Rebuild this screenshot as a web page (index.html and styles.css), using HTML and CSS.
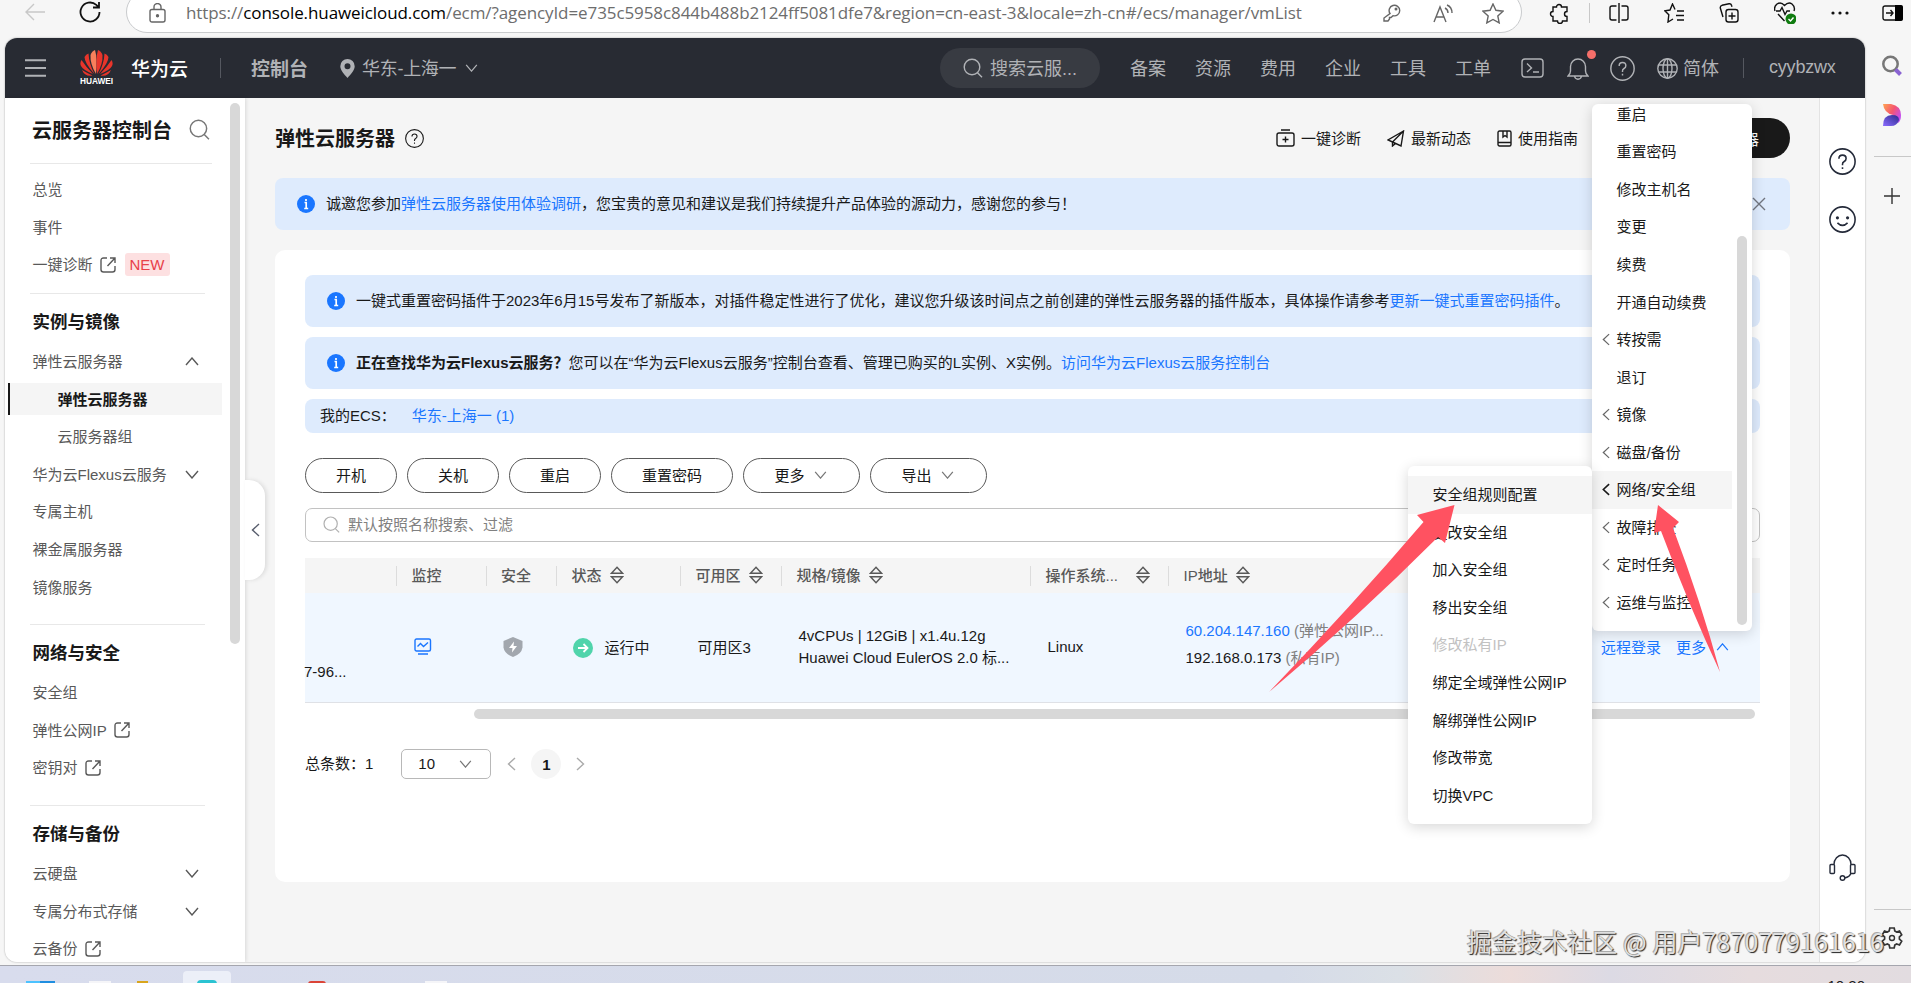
FILE: index.html
```html
<!DOCTYPE html>
<html lang="zh-CN">
<head>
    <meta charset="UTF-8">
    <title>弹性云服务器</title>
    <link rel="stylesheet" href="styles.css">
</head>
<body>
    <svg class="defs" width="0" height="0">
        <symbol id="down" viewBox="0 0 14 9"><path d="M1 1l6 7 6-7"/></symbol>
        <symbol id="up" viewBox="0 0 14 9"><path d="M1 8l6-7 6 7"/></symbol>
        <symbol id="left" viewBox="0 0 9 14"><path d="M8 1L1.500 7 8 13"/></symbol>
        <symbol id="right" viewBox="0 0 9 14"><path d="M1 1l6.500 6L1 13"/></symbol>
        <symbol id="search" viewBox="0 0 20 20"><circle cx="9" cy="9" r="7.800"/><path d="M14.500 14.800L19 19.300"/></symbol>
        <symbol id="link" viewBox="0 0 16 16"><path d="M7 1H3.500Q1 1 1 3.500v9Q1 15 3.500 15h9q2.500 0 2.500-2.500V9M10 1h5v5M15 1L7.500 9"/></symbol>
        <symbol id="help" viewBox="0 0 24 24"><circle cx="12" cy="12" r="11.200"/><path d="M8.800 9.500q0-3.200 3.200-3.200t3.200 3q0 1.700-1.700 2.700T12 14.500v.8M12 17v1.700"/></symbol>
        <symbol id="sort" viewBox="0 0 14 18"><path d="M7 1.200l5.500 6h-11zM7 16.800l5.500-6h-11z"/></symbol>
        <symbol id="info" viewBox="0 0 18 18"><circle cx="9" cy="9" r="9" fill="#1a76ff" stroke="none"/><path d="M7.500 7.500H9.200v6M7.200 13.500h4M9 4v2" stroke="#fff" stroke-width="1.700"/></symbol>
    </svg>

    <div class="toolbar">
        <svg class="back" width="21" height="18" viewBox="0 0 21 18"><path d="M20 9H1M9 1L1 9l8 8"/></svg>
        <svg class="reload" width="22" height="22" viewBox="0 0 22 22"><path d="M20.500 11a9.500 9.500 0 1 1-3.200-7.100L20 6.500M20 1v5.500h-6"/></svg>
        <div class="address">
            <svg width="17" height="20" viewBox="0 0 17 20"><rect x="1" y="6.500" width="15" height="12.500" rx="2"/><path d="M5 6.500V4a3.500 3.500 0 0 1 7 0v2.500"/><circle cx="8.500" cy="12.700" r="1" fill="#555"/></svg>
            <span class="url">https://<b>console.huaweicloud.com</b>/ecm/?agencyId=e735c5958c844b488b2124ff5081dfe7&amp;region=cn-east-3&amp;locale=zh-cn#/ecs/manager/vmList</span>
            <svg class="key" width="18" height="18" viewBox="0 0 18 18"><path d="M7 9.500a5.300 5.300 0 1 1 3 2.200L8 13.500H6.500V15L5 17H1v-3z"/><circle cx="13" cy="5" r=".8"/></svg>
            <svg class="read" width="20" height="19" viewBox="0 0 20 19"><path d="M1 18L7 3l6 15M3 13h8M12 4q3 1.500 3 5M14 1q5 2 5 8"/></svg>
            <svg width="22" height="21" viewBox="0 0 22 21"><path d="M11 1l2.900 6.300 7.100.9-5.200 4.700 1.400 7L11 16.500 4.800 19.900l1.400-7L1 8.200l7.100-.9z"/></svg>
        </div>
        <div class="tools">
            <svg width="20" height="21" viewBox="0 0 20 21"><path d="M4 4h3.500a2.500 2.500 0 0 1 5 0H18v4.500a2.500 2.500 0 0 0 0 5V18h-4.500a2.500 2.500 0 0 1-5 0H4v-4.500a2.500 2.500 0 0 1 0-5z"/></svg>
            <i></i>
            <svg width="20" height="20" viewBox="0 0 20 20"><path d="M7.500 3H3Q1 3 1 5v10q0 2 2 2h4.500M12.500 3H17q2 0 2 2v10q0 2-2 2h-4.500M10 0v20"/></svg>
            <svg width="20" height="20" viewBox="0 0 20 20"><path d="M11 6.500L8.500 1 6 7 .8 7.800l4 4L4 19l5-3M13 8h7M12 12.500h8M13 17h7"/></svg>
            <svg width="20" height="20" viewBox="0 0 20 20"><rect x="7" y="6.500" width="12" height="12.500" rx="2.500"/><path d="M13 9.500v7M9.500 13h7M4 14L1.300 5Q1 3 3 2.300L10 .8q2-.3 2.500 1.500l.5 1.500"/></svg>
            <svg width="22" height="22" viewBox="0 0 22 22"><path d="M1 9Q-.5 5 3 2q4-2.500 7.500 1.500Q14.500-.5 18 2q3.500 3 2 7M2 9h4l2-3.500 3 7 2-3.500h3M4 12l6.500 7"/><circle cx="17" cy="17" r="5.500" fill="#107c10" stroke="none"/><path d="M14.500 17l2 2 3-3.500" stroke="#fff"/></svg>
            <svg width="18" height="4" viewBox="0 0 18 4"><g fill="#111" stroke="none"><circle cx="2" cy="2" r="1.600"/><circle cx="9" cy="2" r="1.600"/><circle cx="16" cy="2" r="1.600"/></g></svg>
            <svg width="21" height="16" viewBox="0 0 21 16"><rect x="1" y="1" width="19" height="14" rx="2"/><path d="M13 0h6q2 0 2 2v12q0 2-2 2h-6z" fill="#000" stroke="none"/><path d="M4 8h7M8.500 5L11 8l-2.500 3"/></svg>
        </div>
    </div>

    <div class="window">
        <div class="page">
            <header class="header">
                <svg class="burger" width="21" height="18" viewBox="0 0 21 18"><path d="M0 1.200h21M0 9h21M0 16.800h21"/></svg>
                <div class="logo">
                    <svg width="33" height="26" viewBox="0 0 33 26"><g fill="#e8352b" stroke="none">
                        <path d="M16 24Q10 14 10.500 5 12 1 15 0q2.500 8 1 24z" fill="#f7805c"/><path d="M17 24Q23 14 22.500 5 21 1 18 0q-2.500 8-1 24z"/>
                        <path d="M14.500 24Q4.500 13 4.500 7 6 4 8.500 3.500 9 14 14.500 24zM18.500 24Q28.500 13 28.500 7 27 4 24.500 3.500 24 14 18.500 24z"/>
                        <path d="M13 24Q3 20 1 16q-1.500-3 .5-6Q6 17 13 24zM20 24q10-4 12-8 1.500-3-.5-6Q27 17 20 24z"/>
                        <path d="M12.500 25.500Q5 27 2 20q5 3 10.500 5.500zM20.500 25.500Q28 27 31 20q-5 3-10.500 5.500z"/></g></svg>
                    <span>HUAWEI</span>
                </div>
                <span class="brand">华为云</span>
                <i class="bar"></i>
                <span class="console">控制台</span>
                <svg class="pin" width="15" height="19" viewBox="0 0 15 19"><path fill-rule="evenodd" d="M7.500 0a7.200 7.200 0 0 1 7.200 7.200c0 4-4 8-7.200 11.800C4.300 15.200.3 11.200.3 7.200A7.200 7.200 0 0 1 7.500 0zm0 4.200a3 3 0 1 0 0 6 3 3 0 0 0 0-6z"/></svg>
                <span class="region">华东-上海一</span>
                <svg width="13" height="8"><use href="#down"/></svg>
                <div class="header-search"><svg width="20" height="20"><use href="#search"/></svg><span>搜索云服...</span></div>
                <nav><span>备案</span><span>资源</span><span>费用</span><span>企业</span><span>工具</span><span>工单</span></nav>
                <svg class="term" width="23" height="20" viewBox="0 0 23 20"><rect x="1" y="1" width="21" height="18" rx="3"/><path d="M6 5.500l4.500 4.500L6 14M12 14h6"/></svg>
                <div class="bell"><svg width="22" height="23" viewBox="0 0 22 23"><path d="M1 19h20q-2.500-2-2.500-5V9.500a7.500 7.500 0 0 0-15 0V14q0 3-2.500 5zM7.500 19q.5 3.200 3.500 3.200t3.500-3.200"/></svg><em></em></div>
                <svg class="header-help" width="25" height="25"><use href="#help"/></svg>
                <svg class="globe" width="21" height="21" viewBox="0 0 21 21"><circle cx="10.500" cy="10.500" r="9.700"/><ellipse cx="10.500" cy="10.500" rx="4.500" ry="9.700"/><path d="M1.500 7h18M1.500 14h18M10.500 1v19"/></svg>
                <span>简体</span>
                <i class="bar"></i>
                <span class="user">cyybzwx</span>
            </header>

            <div class="body">
                <aside class="sidebar">
                    <div class="side-title">云服务器控制台<svg width="21" height="21"><use href="#search"/></svg></div>
                    <ul>
                        <li>总览</li>
                        <li>事件</li>
                        <li>一键诊断<svg width="16" height="16"><use href="#link"/></svg><span class="new">NEW</span></li>
                    </ul>
                    <h3>实例与镜像</h3>
                    <ul>
                        <li>弹性云服务器<svg class="fold" width="14" height="9"><use href="#up"/></svg></li>
                        <li class="sub active">弹性云服务器</li>
                        <li class="sub">云服务器组</li>
                        <li>华为云Flexus云服务<svg class="fold" width="14" height="9"><use href="#down"/></svg></li>
                        <li>专属主机</li>
                        <li>裸金属服务器</li>
                        <li>镜像服务</li>
                    </ul>
                    <h3>网络与安全</h3>
                    <ul>
                        <li>安全组</li>
                        <li>弹性公网IP<svg width="16" height="16"><use href="#link"/></svg></li>
                        <li>密钥对<svg width="16" height="16"><use href="#link"/></svg></li>
                    </ul>
                    <h3>存储与备份</h3>
                    <ul>
                        <li>云硬盘<svg class="fold" width="14" height="9"><use href="#down"/></svg></li>
                        <li>专属分布式存储<svg class="fold" width="14" height="9"><use href="#down"/></svg></li>
                        <li>云备份<svg width="16" height="16"><use href="#link"/></svg></li>
                    </ul>
                    <div class="side-scroll"></div>
                    <div class="collapse"><svg width="9" height="14"><use href="#left"/></svg></div>
                </aside>

                <main class="main">
                    <div class="title-row">
                        <h1>弹性云服务器</h1>
                        <svg width="19" height="19"><use href="#help"/></svg>
                        <div class="links">
                            <span><svg width="19" height="18" viewBox="0 0 19 18"><rect x="1" y="4" width="17" height="13" rx="2"/><path d="M5 1h9M9.500 7.500v6M6.500 10.500h6"/></svg>一键诊断</span>
                            <span><svg width="18" height="17" viewBox="0 0 18 17"><path d="M16.500 1L1 10l4.500 2L14 16zM16.500 1l-11 11v4l3-2.500"/></svg>最新动态</span>
                            <span><svg width="15" height="17" viewBox="0 0 15 17"><rect x="1" y="1" width="13" height="15" rx="1.500"/><path d="M1 12.500h13M6 1v6l2-1.500L10 7V1"/></svg>使用指南</span>
                        </div>
                        <button class="buy">购买弹性云服务器</button>
                    </div>
                    <div class="notice top"><svg width="18" height="18"><use href="#info"/></svg><p>诚邀您参加<a>弹性云服务器使用体验调研</a>，您宝贵的意见和建议是我们持续提升产品体验的源动力，感谢您的参与！</p><svg class="close" width="14" height="14" viewBox="0 0 14 14"><path d="M1 1l12 12M13 1L1 13"/></svg></div>

                    <section class="card">
                        <div class="notice"><svg width="18" height="18"><use href="#info"/></svg><p>一键式重置密码插件于2023年6月15号发布了新版本，对插件稳定性进行了优化，建议您升级该时间点之前创建的弹性云服务器的插件版本，具体操作请参考<a>更新一键式重置密码插件</a>。</p></div>
                        <div class="notice"><svg width="18" height="18"><use href="#info"/></svg><p><b>正在查找华为云Flexus云服务？</b>您可以在“华为云Flexus云服务”控制台查看、管理已购买的L实例、X实例。<a>访问华为云Flexus云服务控制台</a></p></div>
                        <div class="my-ecs">我的ECS：<a>华东-上海一 (1)</a></div>
                        <div class="actions">
                            <button>开机</button>
                            <button>关机</button>
                            <button>重启</button>
                            <button class="wide">重置密码</button>
                            <button class="more">更多<svg width="13" height="8"><use href="#down"/></svg></button>
                            <button class="more">导出<svg width="13" height="8"><use href="#down"/></svg></button>
                        </div>
                        <div class="filter"><svg width="17" height="17"><use href="#search"/></svg>默认按照名称搜索、过滤</div>
                        <div class="table">
                            <div class="row head">
                                <span></span>
                                <span>监控</span>
                                <span>安全</span>
                                <span>状态<svg width="14" height="18"><use href="#sort"/></svg></span>
                                <span>可用区<svg width="14" height="18"><use href="#sort"/></svg></span>
                                <span>规格/镜像<svg width="14" height="18"><use href="#sort"/></svg></span>
                                <span>操作系统...<svg class="far" width="14" height="18"><use href="#sort"/></svg></span>
                                <span>IP地址<svg width="14" height="18"><use href="#sort"/></svg></span>
                                <span></span>
                            </div>
                            <div class="row data">
                                <span class="name">7-96...</span>
                                <span><svg class="monitor" width="18" height="17" viewBox="0 0 18 17"><rect x="1" y="1" width="15.500" height="12" rx="1.500"/><path d="M3.500 8.500l3-3 3 3L14 4.500M4 16h10"/></svg></span>
                                <span><svg class="shield" width="20" height="20" viewBox="0 0 20 20"><path d="M10 0l9.500 4v6.500Q18.500 17 10 20 1.500 17 .5 10.500V4z"/><path d="M11 4.500L6 11h3.500L9 15.500 14 9h-3.500z" fill="#fff"/></svg></span>
                                <span class="status"><svg width="20" height="20" viewBox="0 0 20 20"><circle cx="10" cy="10" r="10" fill="#50d4ab" stroke="none"/><path d="M5 10h9.500M10.500 6l4 4-4 4" stroke="#fff" stroke-width="1.800"/></svg>运行中</span>
                                <span>可用区3</span>
                                <span class="two">4vCPUs | 12GiB | x1.4u.12g<br>Huawei Cloud EulerOS 2.0 标...</span>
                                <span>Linux</span>
                                <span class="two ip"><a>60.204.147.160</a> <small>(弹性公网IP...</small><br>192.168.0.173 <small>(私有IP)</small></span>
                                <span class="ops"><a>远程登录</a><a>更多<svg width="13" height="8"><use href="#up"/></svg></a></span>
                            </div>
                            <div class="h-scroll"></div>
                        </div>
                        <div class="pager">
                            <span>总条数：1</span>
                            <div class="size">10<svg width="13" height="8"><use href="#down"/></svg></div>
                            <svg width="9" height="14"><use href="#left"/></svg>
                            <b>1</b>
                            <svg width="9" height="14"><use href="#right"/></svg>
                        </div>
                    </section>
                </main>

                <div class="strip">
                    <svg width="27" height="27"><use href="#help"/></svg>
                    <svg width="27" height="27" viewBox="0 0 24 24"><circle cx="12" cy="12" r="11.200"/><path d="M7.500 15q4.500 4.500 9 0"/><g fill="#252b3a" stroke="none"><circle cx="7.500" cy="10.500" r="1.400"/><circle cx="16.500" cy="10.500" r="1.400"/></g></svg>
                    <svg class="headset" width="27" height="27" viewBox="0 0 27 27"><path d="M5 10.500a8.500 9.500 0 0 1 17 0M22 19q-1 4-6.500 5"/><rect x="1" y="10.500" width="4.500" height="9" rx="1"/><rect x="21.500" y="10.500" width="4.500" height="9" rx="1"/><circle cx="13.500" cy="24" r="2.300"/></svg>
                </div>
            </div>
        </div>

        <div class="rail">
            <svg width="22" height="22" viewBox="0 0 22 22"><circle cx="9.500" cy="9" r="7.200" stroke="#777" stroke-width="2.500"/><path d="M14.500 14.500l5 5" stroke="#8a63d2" stroke-width="4"/></svg>
            <svg width="20" height="22" viewBox="0 0 20 22">
                <defs>
                    <linearGradient id="warm" x2="1" y2=".6"><stop offset="0" stop-color="#ffa552"/><stop offset=".55" stop-color="#f5566f"/><stop offset="1" stop-color="#c44df0"/></linearGradient>
                    <linearGradient id="cool" x1="1" x2="0" y2="1"><stop offset="0" stop-color="#2c2a8c"/><stop offset="1" stop-color="#8a6bff"/></linearGradient>
                </defs>
                <g stroke="none"><path d="M1 0h8q10 2 10 11 0 6-3 8l-5-8Q2 9 1 0z" fill="url(#warm)"/><path d="M1 22Q1 11 10 11q7 0 7 5-2 6-8 6z" fill="url(#cool)"/></g>
            </svg>
            <hr>
            <svg width="16" height="16" viewBox="0 0 16 16"><path d="M8 0v16M0 8h16"/></svg>
            <hr class="low">
            <svg width="22" height="22" viewBox="0 0 22 22"><path stroke-width="1.700" d="M8.800 1h4.400l.6 3 1.800 1 2.900-1 2.200 3.800-2.300 2v2.400l2.300 2-2.200 3.800-2.900-1-1.800 1-.6 3H8.800l-.6-3-1.800-1-2.900 1-2.200-3.800 2.300-2V9.800l-2.300-2L3.500 4l2.900 1 1.800-1z"/><circle cx="11" cy="11" r="2.500"/></svg>
        </div>
    </div>

    <div class="taskbar">
        <i class="win"></i><i class="doc"></i><i class="folder"></i><i class="tab"><b></b></i><i class="red"></i><i class="doc"></i>
        <time>10:20</time>
    </div>

    <!-- 更多 下拉菜单 -->
    <ul class="menu">
        <li>重启</li>
        <li>重置密码</li>
        <li>修改主机名</li>
        <li>变更</li>
        <li>续费</li>
        <li>开通自动续费</li>
        <li><svg width="8" height="13"><use href="#left"/></svg>转按需</li>
        <li>退订</li>
        <li><svg width="8" height="13"><use href="#left"/></svg>镜像</li>
        <li><svg width="8" height="13"><use href="#left"/></svg>磁盘/备份</li>
        <li class="active"><svg width="8" height="13"><use href="#left"/></svg>网络/安全组</li>
        <li><svg width="8" height="13"><use href="#left"/></svg>故障排查</li>
        <li><svg width="8" height="13"><use href="#left"/></svg>定时任务</li>
        <li><svg width="8" height="13"><use href="#left"/></svg>运维与监控</li>
    </ul>
    <ul class="menu submenu">
        <li class="active">安全组规则配置</li>
        <li>更改安全组</li>
        <li>加入安全组</li>
        <li>移出安全组</li>
        <li class="disabled">修改私有IP</li>
        <li>绑定全域弹性公网IP</li>
        <li>解绑弹性公网IP</li>
        <li>修改带宽</li>
        <li>切换VPC</li>
    </ul>
    <svg class="arrows" width="460" height="200" viewBox="1265 500 460 200">
        <path d="M1454.500 505L1417 515l6.500 7Q1350 608 1269 692q88-74 169-155l7 6z"/>
        <path d="M1658 505l21 17-6 6q28 74 47 144-30-64-59-141l-7 2z"/>
    </svg>
    <div class="watermark">掘金技术社区 @ 用户7870779161616</div>
</body>
</html>
```
FILE: styles.css
```css
* {
    box-sizing: border-box;
}

body {
    margin: 0;
    width: 1911px;
    height: 983px;
    overflow: hidden;
    position: relative;
    background: #f6f6f6;
    color: #191919;
    font-family: "Liberation Sans", "Noto Sans CJK SC", sans-serif;
    font-size: 15px;
}

ul, h1, h3, p {
    margin: 0;
    padding: 0;
    list-style: none;
}

svg {
    display: block;
    flex: none;
    fill: none;
    stroke: currentColor;
    stroke-width: 1.4;
}

.defs {
    position: absolute;
}

a {
    color: #1a76ff;
}

/* browser toolbar */
.toolbar {
    display: flex;
    height: 38px;
    color: #111;
}

.back {
    margin: 3px 0 0 25px;
    color: #c8c8c8;
}

.reload {
    margin: 1px 0 0 33px;
    stroke-width: 1.8;
}

.address {
    display: flex;
    align-items: center;
    width: 1396px;
    height: 42px;
    margin: -9px 0 0 25px;
    padding: 2px 18px 0 22px;
    border: 1px solid #c9cbcd;
    border-radius: 21px;
    background: #fff;
    color: #666;
}

.url {
    flex: none;
    width: 1115px;
    margin-left: 20px;
    padding-bottom: 2px;
    font-family: "Open Sans", "Noto Sans", sans-serif;
    font-size: 17px;
    letter-spacing: -0.09px;
    white-space: nowrap;
    color: #6d6d6d;
}

.url b {
    font-weight: 400;
    color: #000;
}

.key {
    margin-left: 82px;
}

.read {
    margin: 0 29px 0 32px;
}

.tools {
    display: flex;
    align-items: center;
    height: 26px;
    margin-left: 27px;
    gap: 35px;
}

.tools i {
    width: 1px;
    height: 20px;
    margin: 0 -16px 0 -15px;
    background: #c8c8c8;
}

.tools svg:last-child {
    margin-left: -2px;
}

/* window */
.window {
    display: flex;
    height: 924px;
}

.page {
    width: 1860px;
    height: 924px;
    margin-left: 5px;
    border-radius: 12px;
    overflow: hidden;
    box-shadow: 0 0 2px rgba(0, 0, 0, 0.35);
}

.header {
    display: flex;
    align-items: center;
    height: 60px;
    background: #282b33;
    color: #b0b2b6;
    font-size: 18px;
}

.header > span, .header nav, .header-search span {
    padding-bottom: 2px;
}

.burger {
    margin: 0 34px 0 20px;
    stroke-width: 2;
}

.logo {
    display: flex;
    flex-direction: column;
    align-items: center;
    width: 33px;
}

.logo span {
    font: bold 8.3px/11px "Liberation Sans", sans-serif;
    color: #fff;
}

.brand {
    margin-left: 18px;
    font-size: 19px;
    font-weight: 500;
    color: #fff;
}

.bar {
    width: 1px;
    height: 20px;
    margin-left: 32px;
    background: #555860;
}

.console {
    margin-left: 30px;
    font-size: 19px;
    font-weight: 700;
}

.pin {
    margin: 0 7px 0 32px;
    fill: currentColor;
    stroke: none;
}

.region {
    margin-right: 9px;
    letter-spacing: -0.3px;
}

.header-search {
    display: flex;
    align-items: center;
    width: 160px;
    height: 40px;
    margin-left: auto;
    padding-left: 23px;
    gap: 7px;
    border-radius: 20px;
    background: #383b42;
}

.header nav {
    display: flex;
    gap: 29px;
    margin-left: 30px;
}

.term {
    margin-left: 30px;
}

.bell {
    position: relative;
    margin-left: 23px;
}

.bell em {
    position: absolute;
    top: -7px;
    right: -7px;
    width: 9px;
    height: 9px;
    border-radius: 50%;
    background: #f66f6a;
}

.header-help {
    margin-left: 21px;
}

.globe {
    margin: 0 5px 0 22px;
}

.header .globe ~ .bar {
    margin-left: 24px;
}

.user {
    width: 67px;
    margin: 0 29px 0 25px;
    letter-spacing: -0.2px;
}

.body {
    display: flex;
    height: 864px;
}

/* sidebar */
.sidebar {
    position: relative;
    z-index: 1;
    width: 240px;
    background: #fff;
    color: #575d6c;
    box-shadow: 1px 0 4px rgba(0, 0, 0, 0.12);
}

.side-title {
    display: flex;
    align-items: center;
    justify-content: space-between;
    height: 66px;
    margin: 0 33px 7px 25px;
    padding: 0 2px 2px;
    border-bottom: 1px solid #e8e8e8;
    font-size: 20px;
    font-weight: 700;
    color: #191919;
}

.side-title svg {
    color: #777;
}

.sidebar ul {
    display: flex;
    flex-direction: column;
}

.sidebar li {
    display: flex;
    align-items: center;
    height: 37.6px;
    padding: 0 46px 2px 27.5px;
    color: #595959;
}

.sidebar li svg {
    position: relative;
    top: 1px;
    margin-left: 7px;
}

.sidebar li .fold {
    margin-left: auto;
}

.new {
    margin: 2px 0 0 9px;
    padding: 0 5px;
    border-radius: 3px;
    background: #fde0e1;
    color: #e8404a;
    line-height: 23px;
}

.sidebar .sub {
    height: 32px;
    margin: 2.8px 23px 2.8px 3px;
    padding-left: 49.500px;
}

.sidebar .active {
    padding-left: 47.500px;
    border-left: 2px solid #191919;
    background: #f5f5f5;
    color: #191919;
    font-weight: 700;
}

.sidebar h3 {
    height: 50px;
    margin: 18px 40px 0 25px;
    padding-left: 2.500px;
    border-top: 1px solid #e8e8e8;
    font-size: 17.5px;
    line-height: 56px;
    color: #191919;
}

.side-title + ul + h3 {
    margin-top: 9px;
}

.side-scroll {
    position: absolute;
    top: 5px;
    right: 5px;
    width: 10px;
    height: 541px;
    border-radius: 5px;
    background: #d8d8d8;
}

.collapse {
    position: absolute;
    top: 382px;
    left: 240px;
    display: flex;
    align-items: center;
    justify-content: center;
    width: 20px;
    height: 100px;
    border-radius: 0 16px 16px 0;
    background: #fff;
    box-shadow: 2px 0 4px rgba(0, 0, 0, 0.1);
}

/* main */
.main {
    width: 1574px;
    padding: 20px 29px 0 30px;
    background: #f5f5f5;
}

.title-row {
    display: flex;
    align-items: center;
    height: 40px;
}

h1 {
    margin-right: 10px;
    padding-bottom: 2px;
    font-size: 20px;
}

.links {
    display: flex;
    gap: 26px;
    margin-left: auto;
    padding-bottom: 2px;
}

.links span {
    display: flex;
    align-items: center;
    gap: 6px;
}

.links svg {
    position: relative;
    top: 1px;
}

.buy {
    height: 40px;
    margin-left: 30px;
    padding: 0 31px;
    border: 0;
    border-radius: 20px;
    background: #191919;
    color: #fff;
    font: inherit;
}

.notice {
    display: flex;
    align-items: center;
    height: 52px;
    margin-bottom: 10px;
    padding: 0 22px;
    gap: 11px;
    border-radius: 8px;
    background: #deebfd;
    white-space: nowrap;
}

.notice p {
    padding-bottom: 3px;
}

.notice.top {
    margin: 20px 0;
}

.close {
    margin-left: auto;
    color: #71757f;
}

.notice.top .close {
    margin-right: 2px;
}

.card {
    height: 632px;
    padding: 25px 30px;
    border-radius: 10px;
    background: #fff;
}

.my-ecs {
    height: 34px;
    padding-left: 15px;
    border-radius: 8px;
    background: #deebfd;
    line-height: 33px;
}

.my-ecs a {
    margin-left: 16px;
}

.actions {
    display: flex;
    gap: 10px;
    margin-top: 25px;
}

.actions button {
    display: flex;
    align-items: center;
    justify-content: center;
    width: 92px;
    height: 35px;
    padding: 0 0 3px;
    gap: 9px;
    border: 1px solid #595959;
    border-radius: 18px;
    background: #fff;
    color: #191919;
    font: inherit;
}

.actions .wide {
    width: 122px;
}

.actions .more {
    width: 117px;
    padding-right: 2px;
}

.actions svg {
    margin-top: 2px;
    color: #777;
}

.filter {
    display: flex;
    align-items: center;
    height: 34px;
    margin: 15px 0 16px;
    padding: 0 0 3px 17px;
    gap: 8px;
    border: 1px solid #c2c2c2;
    border-radius: 7px;
    color: #808080;
}

.filter svg {
    margin-top: 2px;
    color: #b0b0b0;
}

.row {
    display: grid;
    grid-template-columns: 91px 89.5px 70.5px 124px 101px 249px 138px 417px 1fr;
}

.head {
    height: 35px;
    align-items: center;
    background: #f5f5f5;
    color: #595959;
    font-weight: 500;
}

.head span {
    display: flex;
    align-items: center;
    height: 20px;
    padding: 0 0 2px 14.500px;
    border-left: 1px solid #dcdcdc;
    white-space: nowrap;
}

.head span:first-child, .head span:last-child {
    border: 0;
}

.head svg {
    margin-left: 8px;
}

.head .far {
    margin-left: 18px;
}

.data {
    height: 110px;
    align-items: center;
    border-bottom: 1px solid #dfe1e6;
    background: #f0f7ff;
    white-space: nowrap;
}

.data span {
    padding: 0 0 2px 17.500px;
}

.data .name {
    padding: 48px 0 0;
    margin-left: -1px;
}

.monitor {
    color: #1a76ff;
}

.shield {
    fill: #a2a7ae;
    stroke: none;
}

.status {
    display: flex;
    align-items: center;
    gap: 12px;
}

.status svg {
    margin: 2px 0 0 -1px;
}

.data .two {
    padding-bottom: 2px;
    line-height: 22px;
}

.data .ip {
    padding-bottom: 8px;
    line-height: 27px;
}

.two small {
    font-size: 15px;
    color: #808080;
}

.data .ops {
    display: flex;
    gap: 15px;
    padding-left: 16px;
}

.ops a {
    display: flex;
    align-items: center;
    gap: 10px;
}

.h-scroll {
    width: 1281px;
    height: 10px;
    margin: 6px 5px 0 auto;
    border-radius: 5px;
    background: #d8d8d8;
}

.pager {
    display: flex;
    align-items: center;
    height: 30px;
    margin-top: 30px;
}

.pager span {
    padding-bottom: 3px;
}

.size {
    display: flex;
    align-items: center;
    justify-content: space-between;
    width: 90px;
    height: 30px;
    margin: 0 16px 0 28px;
    padding: 0 18px 1px 16px;
    border: 1px solid #b8b8b8;
    border-radius: 5px;
}

.size svg {
    color: #777;
}

.pager > svg {
    color: #aaa;
}

.pager b {
    width: 30px;
    height: 30px;
    margin: 0 15px;
    border-radius: 50%;
    background: #f5f5f5;
    line-height: 31px;
    text-align: center;
}

.strip {
    display: flex;
    flex-direction: column;
    align-items: center;
    width: 46px;
    padding: 50px 0 81px;
    gap: 31px;
    border-left: 1px solid #e3e3e3;
    background: #fff;
    color: #252b3a;
}

.headset {
    margin-top: auto;
}

.rail {
    display: flex;
    flex-direction: column;
    align-items: center;
    width: 46px;
    padding: 17px 0 0 8px;
    color: #333;
}

.rail svg + svg {
    margin: 27px 0 30px;
}

.rail hr {
    width: 37px;
    height: 1px;
    margin: 0 0 31px;
    border: 0;
    background: #c8c8c8;
}

.rail .low {
    margin: auto 0 17px;
}

.rail svg:last-child {
    margin-bottom: 13px;
}

.taskbar {
    display: flex;
    height: 18px;
    margin-top: 3px;
    border-top: 1px solid #a5a6ae;
    background: linear-gradient(90deg, #d8dced 0, #d5dbe8 1280px, #dbe0e6 1400px, #ecdcda 1510px, #dcdae4 1610px, #e6dcde 1750px, #e2dce0);
}

.taskbar i {
    height: 3px;
    margin-top: 15px;
}

.taskbar .win {
    width: 29px;
    margin-left: 26px;
    background: linear-gradient(90deg, #4cc2ff 50%, #1f8ee0 50%);
}

.taskbar .doc {
    width: 22px;
    margin-left: 34px;
    background: #f5f5f8;
}

.taskbar .folder {
    width: 11px;
    margin-left: 26px;
    background: #d9a51c;
}

.taskbar .tab {
    width: 48px;
    height: 13px;
    margin: 5px 0 0 35px;
    padding: 9px 14px 0;
    border-radius: 4px 4px 0 0;
    background: #eceff8;
}

.tab b {
    display: block;
    height: 4px;
    border-radius: 10px 10px 0 0;
    background: #2bc3d2;
}

.taskbar .red {
    width: 18px;
    margin: 15px 65px 0 77px;
    border-radius: 9px 9px 0 0;
    background: #db4437;
}

.taskbar time {
    margin: 11px 46px 0 auto;
    line-height: 17px;
}

/* popup menus */
.menu {
    position: absolute;
    z-index: 3;
    top: 104px;
    left: 1592px;
    width: 160px;
    height: 527px;
    padding-right: 20px;
    border-radius: 6px;
    background: #fff;
    box-shadow: 0 3px 14px rgba(0, 0, 0, 0.16);
}

.menu li {
    display: flex;
    align-items: center;
    height: 37.55px;
    padding: 0 0 2px 24.500px;
}

.menu:not(.submenu) li:first-child {
    margin-top: -8.500px;
}

.menu:not(.submenu)::after {
    content: "";
    position: absolute;
    top: 132px;
    right: 5px;
    width: 10px;
    height: 389px;
    border-radius: 5px;
    background: #d8d8d8;
}

.menu li svg {
    margin: 2px 7px 0 -15px;
    color: #666;
}

.menu .active {
    background: #f5f5f5;
}

.menu .active svg {
    color: #191919;
    stroke-width: 1.8;
}

.menu .disabled {
    color: #c2c2c2;
}

.submenu {
    top: 466px;
    left: 1408px;
    width: 184px;
    height: 358px;
    padding: 10px 0;
}

.arrows {
    position: absolute;
    z-index: 4;
    top: 500px;
    left: 1265px;
    fill: #ff5261;
    stroke: none;
}

.watermark {
    position: absolute;
    z-index: 5;
    top: 923px;
    left: 1467px;
    font: 25px/37px "Noto Sans CJK SC", sans-serif;
    letter-spacing: 0.07px;
    white-space: nowrap;
    color: #e0e0e0;
    text-shadow: 1px 1px 1px #222, -1px -1px 0 #aaa;
}
```
